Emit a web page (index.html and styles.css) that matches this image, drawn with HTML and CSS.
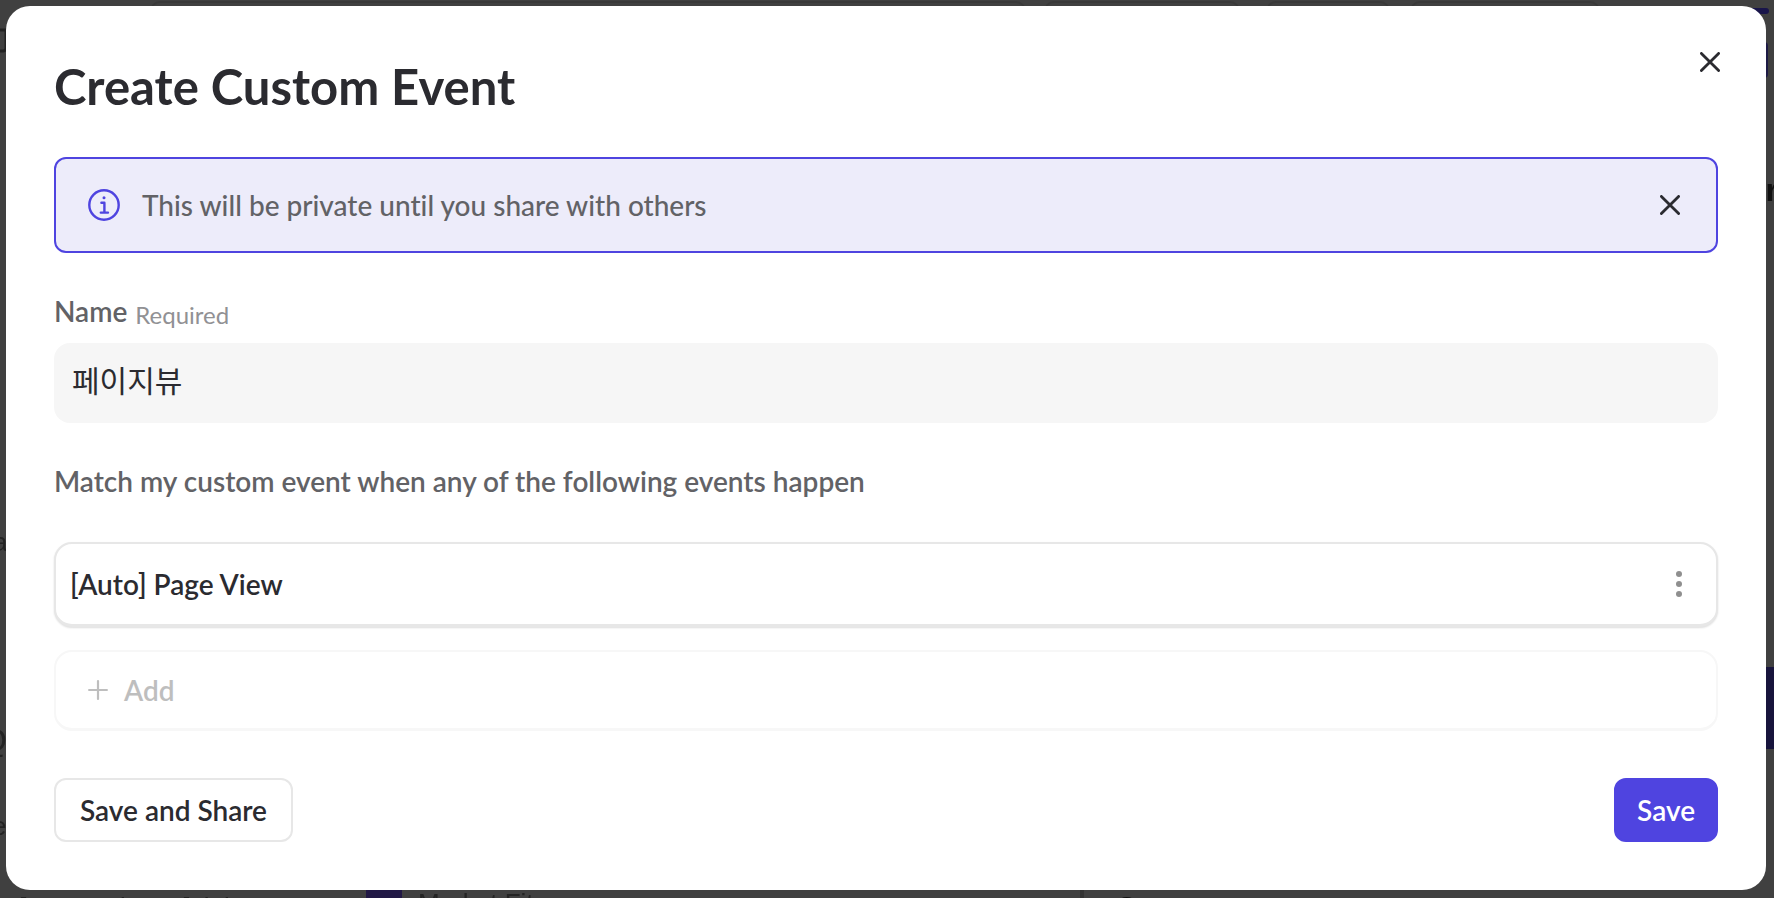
FILE: index.html
```
<!DOCTYPE html>
<html lang="en">
<head>
<meta charset="utf-8">
<title>Create Custom Event</title>
<link rel="stylesheet" href="styles.css">
</head>
<body>
<div class="page" aria-hidden="true">
  <i class="tab tab-a"></i><i class="tab tab-b"></i><i class="tab tab-c"></i><i class="tab tab-d"></i>
  <svg class="edge-icon" viewBox="0 0 24 40" fill="none" stroke="#222" stroke-width="3"><path d="M2 14V8a6 6 0 0 1 12 0v3M0 14h22v18a3 3 0 0 1-3 3H0"/></svg>
  <i class="accent-line"></i><i class="accent-button"></i><i class="accent-block"></i>
  <span class="bit bit-r">r</span>
  <span class="bit bit-a">a</span>
  <span class="bit bit-q">Q</span>
  <span class="bit bit-e">e</span>
  <span class="bit bit-auto">[Auto] Page View - [Link</span>
  <i class="swatch"></i>
  <span class="bit bit-market">Market Fit</span>
  <i class="divider"></i>
  <span class="bit bit-s">S</span>
</div>
<main class="modal" role="dialog" aria-modal="true" aria-labelledby="title">
  <header class="modal-header">
    <h1 class="title" id="title">Create Custom Event</h1>
    <button class="icon-button" type="button" aria-label="Close">
      <svg width="20" height="20" viewBox="0 0 20 20" fill="none" stroke="currentColor" stroke-width="2.8" stroke-linecap="round"><path d="M1.4 1.4l17.2 17.2M18.6 1.4L1.4 18.6"/></svg>
    </button>
  </header>
  <section class="banner">
    <svg class="info" width="32" height="32" viewBox="0 0 32 32" fill="none" stroke="currentColor" stroke-width="2.4"><circle cx="16" cy="16" r="14.7"/><circle cx="16" cy="8.8" r="1.5" fill="currentColor" stroke="none"/><path d="M13.4 13.8h3v9.6M12.8 23.6h7.2" stroke-linecap="round" stroke-linejoin="round"/></svg>
    <p class="banner-text">This will be private until you share with others</p>
    <button class="icon-button" type="button" aria-label="Dismiss">
      <svg width="20" height="20" viewBox="0 0 20 20" fill="none" stroke="currentColor" stroke-width="2.8" stroke-linecap="round"><path d="M1.4 1.4l17.2 17.2M18.6 1.4L1.4 18.6"/></svg>
    </button>
  </section>
  <div class="field-head">
    <label class="label" for="name">Name</label>
    <span class="required">Required</span>
  </div>
  <input class="name-input" id="name" type="text" value="페이지뷰">
  <p class="label match">Match my custom event when any of the following events happen</p>
  <div class="event-card">
    <span>[Auto] Page View</span>
    <button class="icon-button more" type="button" aria-label="More options">
      <svg width="6" height="26" viewBox="0 0 6 26" fill="currentColor"><circle cx="3" cy="3" r="3"/><circle cx="3" cy="13" r="3"/><circle cx="3" cy="23" r="3"/></svg>
    </button>
  </div>
  <button class="add-card" type="button">
    <svg width="20" height="20" viewBox="0 0 20 20" fill="none" stroke="currentColor" stroke-width="2.2" stroke-linecap="round"><path d="M10 1.1v17.8M1.1 10h17.8"/></svg>
    Add
  </button>
  <footer class="actions">
    <button class="button" type="button">Save and Share</button>
    <button class="button primary" type="button">Save</button>
  </footer>
</main>
</body>
</html>
```
FILE: styles.css
```
* { box-sizing: border-box; }

body {
  margin: 0;
  background: #404040;
  color: #2b2b30;
  font: 500 28px/32px Lato, "Noto Sans CJK KR", sans-serif;
  font-variant-ligatures: none;
}

h1, p { margin: 0; }

button { font: inherit; color: inherit; cursor: pointer; }

/* Dimmed page behind the dialog */
.page { position: fixed; inset: 0; overflow: hidden; color: #232323; }
.page > * { position: absolute; }
.tab { top: 1px; height: 20px; border: 2px solid #393939; border-radius: 12px; }
.tab-a { left: 150px; width: 876px; }
.tab-b { left: 1044px; width: 196px; }
.tab-c { left: 1266px; width: 124px; }
.tab-d { left: 1410px; width: 190px; }
.edge-icon { left: -16px; top: 16px; width: 24px; height: 40px; }
.accent-line { right: 5px; top: 8px; width: 60px; height: 6px; border-radius: 3px; background: #19154a; }
.accent-button { right: 6px; top: 42px; width: 20px; height: 36px; border-radius: 4px; background: #1d1a45; }
.accent-block { right: 0; top: 667px; width: 20px; height: 82px; background: #17143c; }
.bit { font: 26px/32px "Liberation Sans", sans-serif; white-space: nowrap; }
.bit-r { right: -4px; top: 174px; font-weight: 700; font-size: 32px; color: #111; }
.bit-a { left: -7px; top: 526px; }
.bit-q { left: -18px; top: 724px; font-size: 32px; }
.bit-e { left: -8px; top: 810px; }
.bit-auto { left: -40px; top: 891px; }
.bit-market { left: 418px; top: 887px; }
.bit-s { left: 1118px; top: 890px; font-weight: 700; color: #111; }
.swatch { left: 366px; bottom: 0; width: 36px; height: 20px; background: #211845; }
.divider { left: 1080px; bottom: 0; width: 4px; height: 20px; background: #333; }

.modal {
  position: relative;
  display: flex;
  flex-direction: column;
  margin: 6px 8px 8px 6px;
  padding: 52px 48px 48px;
  border-radius: 24px;
  background: #fff;
}

.modal-header { display: flex; justify-content: space-between; align-items: flex-start; margin-bottom: 43px; }
.title { font-size: 49px; line-height: 56px; font-weight: 700; }

.icon-button { display: grid; place-items: center; width: 32px; height: 32px; padding: 0; border: 0; background: none; }
.modal-header .icon-button { margin: -12px -8px 0 0; }

.banner {
  display: flex;
  align-items: center;
  gap: 22px;
  min-height: 96px;
  margin-bottom: 42px;
  padding: 0 30px 0 32px;
  border: 2px solid #4f44e0;
  border-radius: 12px;
  background: #edecfa;
}
.info { flex: none; color: #4f44e0; }
.banner-text { flex: 1; color: #626266; }

.field-head { display: flex; align-items: flex-start; gap: 8px; margin-bottom: 8px; }
.label { color: #626266; font-weight: 600; }
.required { color: #919194; font-size: 24px; line-height: 40px; font-weight: 400; }

.name-input {
  width: 100%;
  height: 80px;
  padding: 0 18px 8px;
  border: 0;
  border-radius: 16px;
  background: #f6f6f6;
  color: #2b2b30;
  font: 400 30px/40px "Noto Sans CJK KR", sans-serif;
}

.match { margin: 42px 0 45px; }

.event-card, .add-card { display: flex; align-items: center; border: 2px solid #e7e7e7; border-radius: 18px; background: #fff; }
.event-card {
  justify-content: space-between;
  min-height: 85px;
  margin-bottom: 23px;
  padding: 0 21px 0 14px;
  border-bottom-width: 3px;
  box-shadow: 0 1px 2px #0002;
  font-weight: 600;
}
.more { color: #8f8f8f; }

.add-card {
  gap: 16px;
  min-height: 81px;
  margin-bottom: 47px;
  padding: 0 32px;
  border-color: #f7f7f7;
  border-bottom-width: 3px;
  color: #bebebe;
  font-weight: 600;
}

.actions { display: flex; justify-content: space-between; }
.button { height: 64px; padding: 0 24px; border: 2px solid #e7e7e7; border-radius: 12px; background: #fff; font-weight: 600; }
.primary { padding: 0 21px; border-color: #4f44e0; background: #4f44e0; color: #fff; }
```
